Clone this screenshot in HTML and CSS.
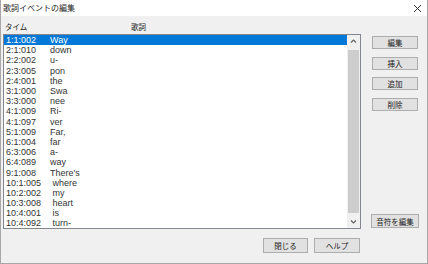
FILE: index.html
```html
<!DOCTYPE html>
<html lang="ja">
<head>
    <meta charset="UTF-8">
    <meta name="viewport" content="width=device-width, initial-scale=1.0">
    <title>歌詞イベントの編集</title>
    <link rel="stylesheet" href="styles.css">
</head>
<body>
    <div class="dialog">
        <div class="titlebar">
            <span class="title">歌詞イベントの編集</span>
            <svg class="close" width="9" height="9" viewBox="0 0 9 9">
                <path d="M1 1L8 8M8 1L1 8" stroke="#333" stroke-width="1" fill="none"/>
            </svg>
        </div>
        <div class="main">
            <div class="left">
                <div class="heads">
                    <span class="h-time">タイム</span>
                    <span class="h-lyric">歌詞</span>
                </div>
                <div class="listbox">
                    <div class="rows">
                        <div class="row selected"><span class="time">1:1:002</span><span class="lyric">Way</span></div>
                        <div class="row"><span class="time">2:1:010</span><span class="lyric">down</span></div>
                        <div class="row"><span class="time">2:2:002</span><span class="lyric">u-</span></div>
                        <div class="row"><span class="time">2:3:005</span><span class="lyric">pon</span></div>
                        <div class="row"><span class="time">2:4:001</span><span class="lyric">the</span></div>
                        <div class="row"><span class="time">3:1:000</span><span class="lyric">Swa</span></div>
                        <div class="row"><span class="time">3:3:000</span><span class="lyric">nee</span></div>
                        <div class="row"><span class="time">4:1:009</span><span class="lyric">Ri-</span></div>
                        <div class="row"><span class="time">4:1:097</span><span class="lyric">ver</span></div>
                        <div class="row"><span class="time">5:1:009</span><span class="lyric">Far,</span></div>
                        <div class="row"><span class="time">6:1:004</span><span class="lyric">far</span></div>
                        <div class="row"><span class="time">6:3:006</span><span class="lyric">a-</span></div>
                        <div class="row"><span class="time">6:4:089</span><span class="lyric">way</span></div>
                        <div class="row"><span class="time">9:1:008</span><span class="lyric">There's</span></div>
                        <div class="row"><span class="time">10:1:005</span><span class="lyric"> where</span></div>
                        <div class="row"><span class="time">10:2:002</span><span class="lyric"> my</span></div>
                        <div class="row"><span class="time">10:3:008</span><span class="lyric"> heart</span></div>
                        <div class="row"><span class="time">10:4:001</span><span class="lyric"> is</span></div>
                        <div class="row"><span class="time">10:4:092</span><span class="lyric"> turn-</span></div>
                    </div>
                    <div class="scrollbar">
                        <svg class="arrow" width="13" height="13" viewBox="0 0 13 13">
                            <path d="M4 7.5L6.5 5L9 7.5" stroke="#606060" stroke-width="1.2" fill="none"/>
                        </svg>
                        <div class="track"><div class="thumb"></div></div>
                        <svg class="arrow" width="13" height="13" viewBox="0 0 13 13">
                            <path d="M4 5.5L6.5 8L9 5.5" stroke="#606060" stroke-width="1.2" fill="none"/>
                        </svg>
                    </div>
                </div>
            </div>
            <div class="side">
                <div class="side-top">
                    <button class="btn">編集</button>
                    <button class="btn">挿入</button>
                    <button class="btn">追加</button>
                    <button class="btn">削除</button>
                </div>
                <button class="btn note">音符を編集</button>
            </div>
        </div>
        <div class="footer">
            <button class="btn close-btn">閉じる</button>
            <button class="btn help-btn">ヘルプ</button>
        </div>
    </div>
</body>
</html>
```
FILE: styles.css
```css
body {
    margin: 0;
    background: #ffffff;
}
.dialog {
    width: 428px;
    height: 264px;
    box-sizing: border-box;
    background: #f0f0f0;
    border: 1px solid #a8a8a8;
    border-top: none;
    font-family: "Noto Sans CJK JP", sans-serif;
    color: #1a1a1a;
}
.titlebar {
    height: 16px;
    background: #ffffff;
    display: flex;
    align-items: center;
    justify-content: space-between;
    padding: 0 5px 0 2px;
}
.title {
    font-size: 8px;
    line-height: 10px;
    color: #222;
}
.close {
    margin-top: 1px;
}
.main {
    display: flex;
    padding-left: 2px;
}
.left {
    width: 358px;
}
.heads {
    height: 18px;
    display: flex;
    align-items: center;
    font-size: 7.5px;
    padding-top: 2px;
    box-sizing: border-box;
}
.h-time {
    width: 126px;
    padding-left: 2px;
}
.listbox {
    height: 195px;
    box-sizing: border-box;
    border: 1px solid #828790;
    background: #ffffff;
    display: flex;
}
.rows {
    flex: 1;
    overflow: hidden;
}
.row {
    height: 10.2px;
    display: flex;
    align-items: center;
    font-family: "Liberation Sans", Arial, sans-serif;
    font-size: 9px;
    color: #333;
    white-space: pre;
}
.row.selected {
    background: #0078d7;
    color: #ffffff;
}
.time {
    width: 44px;
    padding-left: 2px;
}
.scrollbar {
    width: 13px;
    background: #f0f0f0;
    display: flex;
    flex-direction: column;
}
.arrow {
    display: block;
    flex: none;
}
.track {
    flex: 1;
    padding: 2px 1px 2px 1px;
    display: flex;
}
.thumb {
    flex: 1;
    background: #cdcdcd;
}
.side {
    margin-left: 10px;
    display: flex;
    flex-direction: column;
    justify-content: space-between;
    height: 212px;
}
.side-top {
    display: flex;
    flex-direction: column;
    gap: 7.5px;
    padding-top: 20px;
    padding-left: 1px;
}
.btn {
    font-family: "Noto Sans CJK JP", sans-serif;
    font-size: 7.5px;
    color: #1a1a1a;
    background: #e1e1e1;
    border: 1px solid #adadad;
    border-radius: 0;
    height: 13px;
    width: 46px;
    padding: 0;
    line-height: 11px;
}
.note {
    width: 48px;
    height: 14px;
}
.footer {
    display: flex;
    justify-content: flex-end;
    gap: 6px;
    padding: 9px 67px 0 0;
}
.close-btn {
    width: 45px;
    height: 15px;
}
.help-btn {
    width: 46px;
    height: 15px;
}
```
